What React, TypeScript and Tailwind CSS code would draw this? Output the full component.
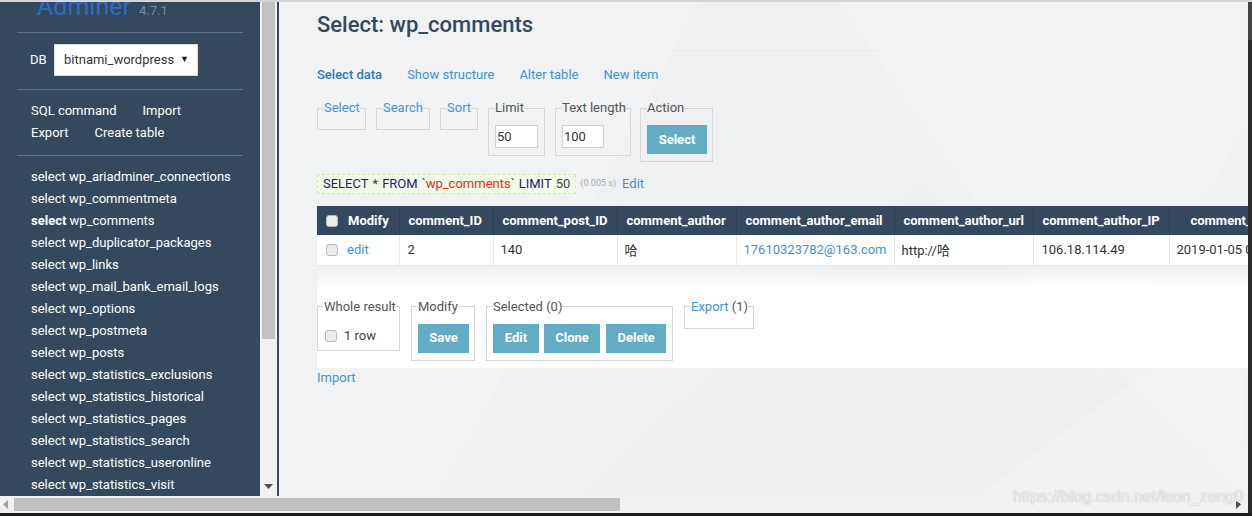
import React from 'react'

const tables = [
  'wp_ariadminer_connections',
  'wp_commentmeta',
  'wp_comments',
  'wp_duplicator_packages',
  'wp_links',
  'wp_mail_bank_email_logs',
  'wp_options',
  'wp_postmeta',
  'wp_posts',
  'wp_statistics_exclusions',
  'wp_statistics_historical',
  'wp_statistics_pages',
  'wp_statistics_search',
  'wp_statistics_useronline',
  'wp_statistics_visit',
]

function Checkbox() {
  return <span className="inline-block w-[12px] h-[12px] rounded-[3px] border border-[#b9b9b9] bg-[#ececec]" />
}

function Btn({ label, w }: { label: string; w: string }) {
  return (
    <span
      className={`${w} h-[29px] flex items-center justify-center bg-[#63adc4] text-white text-[13px] font-bold`}
    >
      {label}
    </span>
  )
}

function Sidebar() {
  return (
    <div className="w-[260px] h-full bg-[#34495e] overflow-hidden text-white text-[13px]">
      {/* logo */}
      <div className="flex items-baseline gap-[8px] pl-[37px] -mt-[8px] h-[25px]">
        <span className="text-[25px] leading-[25px] text-[#2d6bc2]">Adminer</span>
        <span className="text-[13px] text-[#7d8996]">4.7.1</span>
      </div>
      <div className="mx-[17px] mt-[13px] border-t border-[#587290]" />

      {/* db select */}
      <div className="flex items-center mt-[11px] pl-[30px] h-[32px]">
        <span className="w-[24px]">DB</span>
        <div className="w-[144px] h-[32px] bg-white border border-[#ddd] flex items-center justify-between pl-[9px] pr-[8px] text-[#333]">
          <span>bitnami_wordpress</span>
          <span className="text-[9px] text-[#222]">▼</span>
        </div>
      </div>
      <div className="mx-[17px] mt-[13px] border-t border-[#587290]" />

      {/* links */}
      <div className="mt-[10px] pl-[31px] leading-[22px]">
        <div className="flex gap-[26px]">
          <span>SQL command</span>
          <span>Import</span>
        </div>
        <div className="flex gap-[26px]">
          <span>Export</span>
          <span>Create table</span>
        </div>
      </div>
      <div className="mx-[17px] mt-[11px] border-t border-[#587290]" />

      {/* tables */}
      <ul className="mt-[10px] pl-[31px] leading-[22px]">
        {tables.map((t) => (
          <li key={t} className="whitespace-nowrap">
            <span className={t === 'wp_comments' ? 'font-bold' : ''}>select</span>{' '}
            <span>{t}</span>
          </li>
        ))}
      </ul>
    </div>
  )
}

function VScroll() {
  return (
    <div className="w-[17px] h-full bg-[#f1f1f1] flex flex-col items-center">
      <div className="w-[13px] h-[337px] bg-[#c1c1c1]" />
      <div className="flex-1" />
      <svg width="9" height="6" viewBox="0 0 9 6" className="mb-[6px]">
        <path d="M0 0 L9 0 L4.5 5 Z" fill="#505050" />
      </svg>
    </div>
  )
}

function Fieldset({
  legend,
  link,
  children,
  empty,
  w,
}: {
  legend: React.ReactNode
  link?: boolean
  children?: React.ReactNode
  empty?: boolean
  w: string
}) {
  return (
    <fieldset className={`${w} min-w-0 shrink-0 border border-[#d6d6d6] px-[6px] pb-[7px]`}>
      <legend className={`leading-[16px] text-[13px] whitespace-nowrap ${link ? 'text-[#4396d2]' : 'text-[#555]'}`}>{legend}</legend>
      {empty ? <div className="h-[6px]" /> : <div className="pt-[9px]">{children}</div>}
    </fieldset>
  )
}

const headers = [
  { t: 'comment_ID', w: 'w-[94px]' },
  { t: 'comment_post_ID', w: 'w-[124px]' },
  { t: 'comment_author', w: 'w-[119px]' },
  { t: 'comment_author_email', w: 'w-[158px]' },
  { t: 'comment_author_url', w: 'w-[139px]' },
  { t: 'comment_author_IP', w: 'w-[136px]' },
]

function Content() {
  return (
    <div className="relative flex-1 h-full bg-[#eef0f1] overflow-hidden">
      <svg className="absolute inset-0 w-full h-full" viewBox="0 0 969 494" preserveAspectRatio="none">
        <polygon points="0,0 420,0 160,494 0,494" fill="#ffffff" opacity="0.15" />
        <polygon points="560,0 969,0 969,120 820,380" fill="#ffffff" opacity="0.2" />
        <polygon points="300,494 640,180 969,494" fill="#e8ebed" opacity="0.35" />
        <polygon points="700,494 960,300 969,494" fill="#ffffff" opacity="0.2" />
      </svg>

      <div className="relative pl-[38px] text-[13px] text-[#333]">
        <h1 className="mt-[9px] h-[28px] leading-[28px] text-[22px] font-medium text-[#34495e]">
          Select: wp_comments
        </h1>
        <div className="mt-[14px] mr-[40px] border-t border-[#f6f7f8]" />

        <div className="mt-[12px] flex gap-[25px] leading-[18px]">
          <span className="font-medium text-[#2f7ab3]">Select data</span>
          <span className="text-[#3f93d0]">Show structure</span>
          <span className="text-[#3f93d0]">Alter table</span>
          <span className="text-[#3f93d0]">New item</span>
        </div>

        <div className="mt-[16px] flex items-start">
          <Fieldset w="w-[49px]" legend="Select" link empty />
          <div className="w-[10px] shrink-0" />
          <Fieldset w="w-[54px]" legend="Search" link empty />
          <div className="w-[10px] shrink-0" />
          <Fieldset w="w-[38px]" legend="Sort" link empty />
          <div className="w-[10px] shrink-0" />
          <Fieldset w="w-[57px]" legend="Limit">
            <div className="w-[43px] h-[23px] bg-white border border-[#d0d0d0] pl-[1px] leading-[21px]">50</div>
          </Fieldset>
          <div className="w-[10px] shrink-0" />
          <Fieldset w="w-[76px]" legend="Text length">
            <div className="w-[42px] h-[23px] bg-white border border-[#d0d0d0] pl-[1px] leading-[21px]">100</div>
          </Fieldset>
          <div className="w-[9px] shrink-0" />
          <Fieldset w="w-[73px]" legend="Action">
            <Btn label="Select" w="w-[60px]" />
          </Fieldset>
        </div>

        <div className="mt-[12px] flex items-center">
          <span className="inline-flex items-center h-[20px] px-[5px] bg-[#f1fce6] border border-dashed border-[#cfe7b4]">
            <span className="text-[#1c1a80]">SELECT</span>
            <span className="mx-[4px] text-[#444]">*</span>
            <span className="text-[#1c1a80]">FROM</span>
            <span className="ml-[4px] text-[#444]">`</span>
            <span className="text-[#ee2a24]">wp_comments</span>
            <span className="mr-[4px] text-[#444]">`</span>
            <span className="text-[#1c1a80]">LIMIT</span>
            <span className="ml-[4px] text-[#444]">50</span>
          </span>
          <span className="ml-[4px] text-[9px] text-[#aaa]">(0.005 s)</span>
          <span className="ml-[6px] text-[#3f93d0]">Edit</span>
        </div>

        <table className="mt-[12px] border-collapse whitespace-nowrap table-fixed w-[1022px]">
          <thead>
            <tr className="h-[29px] bg-[#34495e] text-white font-bold text-left">
              <th className="w-[82px] pl-[9px] border-r border-[#2c3e50]">
                <div className="flex items-center gap-[10px]">
                  <Checkbox />
                  <span>Modify</span>
                </div>
              </th>
              {headers.map((h) => (
                <th key={h.t} className={`${h.w} px-[9px] border-r border-[#2c3e50] font-bold`}>
                  {h.t}
                </th>
              ))}
              <th className="w-[170px] pl-[21px] font-bold">comment_date</th>
            </tr>
          </thead>
          <tbody>
            <tr className="h-[30px] bg-white border-b border-[#e6e6e6]">
              <td className="pl-[9px] border-r border-[#e6e6e6]">
                <div className="flex items-center gap-[9px]">
                  <Checkbox />
                  <span className="text-[#3f93d0]">edit</span>
                </div>
              </td>
              <td className="px-[8px] border-r border-[#e6e6e6]">2</td>
              <td className="px-[7px] border-r border-[#e6e6e6]">140</td>
              <td className="px-[7px] border-r border-[#e6e6e6] font-['Noto_Sans_CJK_SC',sans-serif]">哈</td>
              <td className="px-[7px] border-r border-[#e6e6e6] text-[#3f93d0]">17610323782@163.com</td>
              <td className="px-[7px] border-r border-[#e6e6e6]">
                http://<span className="font-['Noto_Sans_CJK_SC',sans-serif]">哈</span>
              </td>
              <td className="px-[8px] border-r border-[#e6e6e6]">106.18.114.49</td>
              <td className="px-[7px]">2019-01-05 09:21:37</td>
            </tr>
          </tbody>
        </table>

        {/* footer */}
        <div className="mt-[3px] h-[20px] bg-gradient-to-b from-white/10 to-white" />
        <div className="bg-white pt-[10px] pb-[7px] flex items-start">
          <Fieldset w="w-[83px]" legend="Whole result">
            <div className="flex items-center gap-[7px] h-[22px] pt-[2px] pl-[1px] -mb-[3px]">
              <Checkbox />
              <span className="text-[#444]">1 row</span>
            </div>
          </Fieldset>
          <div className="w-[11px] shrink-0" />
          <Fieldset w="w-[64px]" legend="Modify">
            <Btn label="Save" w="w-[51px]" />
          </Fieldset>
          <div className="w-[11px] shrink-0" />
          <Fieldset w="w-[187px]" legend="Selected (0)">
            <div className="flex">
              <Btn label="Edit" w="w-[46px]" />
              <div className="w-[5px]" />
              <Btn label="Clone" w="w-[57px]" />
              <div className="w-[6px]" />
              <Btn label="Delete" w="w-[60px]" />
            </div>
          </Fieldset>
          <div className="w-[11px] shrink-0" />
          <Fieldset
            w="w-[70px]"
            legend={
              <>
                <span className="text-[#3f93d0]">Export</span> <span className="text-[#555]">(1)</span>
              </>
            }
            empty
          />
        </div>
        <div className="mt-[1px] leading-[18px] text-[#3f93d0]">Import</div>
      </div>
    </div>
  )
}

export default function App() {
  return (
    <div className="relative w-[1252px] h-[516px] overflow-hidden bg-[#1e1e1e] font-['Roboto',sans-serif] flex flex-col">
      <div className="h-[2px] bg-[#d4d4d4] shrink-0" />
      <div className="h-[494px] flex shrink-0">
        <Sidebar />
        <VScroll />
        <div className="w-[2px] h-full bg-[#34495e]" />
        <Content />
        <div className="w-[4px] h-full bg-[#2a2a2a] flex flex-col">
          <div className="h-[38px] bg-[#444]" />
        </div>
      </div>
      <div className="h-[17px] flex shrink-0">
        <div className="w-[1248px] h-full bg-[#f1f1f1] flex items-center">
          <svg width="6" height="9" viewBox="0 0 6 9" className="ml-[3px]">
            <path d="M5 0 L5 9 L0 4.5 Z" fill="#a3a3a3" />
          </svg>
          <div className="ml-[5px] w-[606px] h-[13px] bg-[#c1c1c1]" />
          <div className="flex-1" />
          <svg width="6" height="9" viewBox="0 0 6 9" className="mr-[6px]">
            <path d="M0 0 L0 9 L5 4.5 Z" fill="#505050" />
          </svg>
        </div>
        <div className="flex-1 bg-[#2a2a2a]" />
      </div>
      <div className="flex-1 bg-[#1e1e1e]" />

      <div className="absolute left-[1013px] top-[487px] text-[16px] leading-[20px] font-['Liberation_Sans',sans-serif] text-white/80 [text-shadow:0_0_1px_#9a9a9a]">
        https://blog.csdn.net/leon_zeng0
      </div>
    </div>
  )
}
